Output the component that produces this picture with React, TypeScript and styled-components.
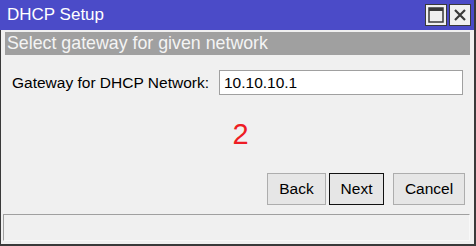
import React from "react";
import styled, { createGlobalStyle } from "styled-components";

const Global = createGlobalStyle`
  html, body { margin: 0; padding: 0; background: #f0f0f0; }
  body { font-family: "Liberation Sans", Arial, sans-serif; }
`;

const Window = styled.div`
  box-sizing: border-box;
  width: 476px;
  height: 246px;
  display: flex;
  flex-direction: column;
  background: #f0f0f0;
  border-left: 1px solid #3a3a3a;
  border-right: 2px solid #3a3a3a;
  border-bottom: 2px solid #3a3a3a;
  font-family: "Liberation Sans", Arial, sans-serif;
`;

const TitleBar = styled.div`
  height: 30px;
  flex: none;
  display: flex;
  align-items: center;
  justify-content: space-between;
  background: #4b4bc8;
  padding: 0 3px 0 7px;
  margin-left: -1px;
`;

const Title = styled.span`
  color: #ffffff;
  font-size: 17px;
`;

const Controls = styled.div`
  display: flex;
  gap: 2px;
`;

const CtrlButton = styled.div`
  box-sizing: border-box;
  width: 22px;
  height: 22px;
  background: #f0f0f0;
  border: 1px solid #3a3a3a;
  display: flex;
  align-items: center;
  justify-content: center;
`;

const SubHeader = styled.div`
  flex: none;
  height: 23px;
  margin: 2px 4px 0 4px;
  background: #a0a0a0;
  color: #f4f4f4;
  font-size: 17.8px;
  display: flex;
  align-items: center;
  padding-left: 2px;
`;

const FieldRow = styled.div`
  display: flex;
  align-items: center;
  gap: 10px;
  margin: 15px 11px 0 11px;
`;

const Label = styled.label`
  font-size: 15.5px;
  color: #000;
`;

const Input = styled.div`
  box-sizing: border-box;
  flex: 1;
  height: 25px;
  background: #fff;
  border: 1px solid #a0a0a0;
  font-size: 15.5px;
  color: #000;
  display: flex;
  align-items: center;
  padding-left: 4px;
`;

const Step = styled.div`
  flex: 1;
  display: flex;
  align-items: center;
  justify-content: center;
  color: #ee1c24;
  font-size: 29px;
  padding-left: 6px;
`;

const ButtonRow = styled.div`
  display: flex;
  justify-content: flex-end;
  margin: 0 9px 0 0;
`;

const Button = styled.div<{ $primary?: boolean; $w: number; $gap?: number }>`
  box-sizing: border-box;
  width: ${(p) => p.$w}px;
  height: 32px;
  margin-left: ${(p) => p.$gap ?? 0}px;
  background: #e6e6e6;
  border: 1px solid ${(p) => (p.$primary ? "#111" : "#adadad")};
  font-size: 15.5px;
  color: #000;
  display: flex;
  align-items: center;
  justify-content: center;
`;

const StatusBar = styled.div`
  flex: none;
  box-sizing: border-box;
  height: 27px;
  margin: 9px 4px 3px 2px;
  border-top: 1px solid #a0a0a0;
  border-left: 1px solid #a0a0a0;
  border-right: 1px solid #f8f8f8;
  border-bottom: 1px solid #f8f8f8;
`;

export default function App() {
  return (
    <>
      <Global />
      <Window>
        <TitleBar>
          <Title>DHCP Setup</Title>
          <Controls>
            <CtrlButton>
              <svg width="16" height="16" viewBox="0 0 16 16">
                <rect x="1" y="1" width="14" height="14" fill="none" stroke="#3a3a3a" strokeWidth="1.5" />
                <rect x="1" y="1" width="14" height="3" fill="#3a3a3a" />
              </svg>
            </CtrlButton>
            <CtrlButton>
              <svg width="14" height="14" viewBox="0 0 14 14">
                <path d="M2 2 L12 12 M12 2 L2 12" stroke="#3a3a3a" strokeWidth="2.2" />
              </svg>
            </CtrlButton>
          </Controls>
        </TitleBar>
        <SubHeader>Select gateway for given network</SubHeader>
        <FieldRow>
          <Label>Gateway for DHCP Network:</Label>
          <Input>10.10.10.1</Input>
        </FieldRow>
        <Step>2</Step>
        <ButtonRow>
          <Button $w={59}>Back</Button>
          <Button $w={55} $gap={3} $primary>Next</Button>
          <Button $w={72} $gap={9}>Cancel</Button>
        </ButtonRow>
        <StatusBar />
      </Window>
    </>
  );
}
